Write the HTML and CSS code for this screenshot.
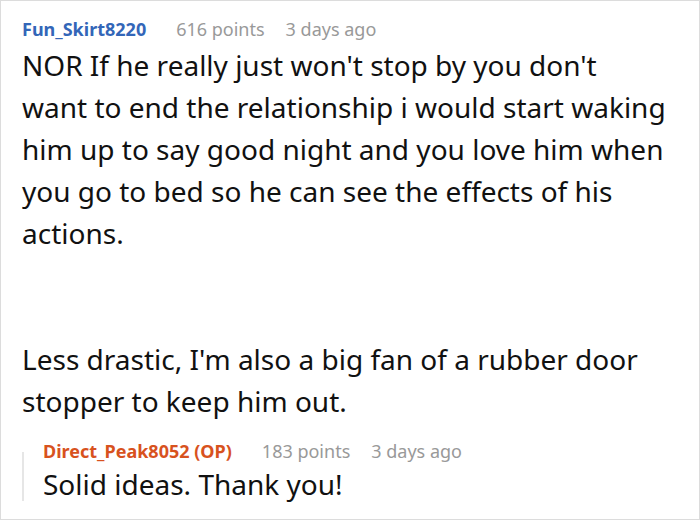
FILE: index.html
```html
<!DOCTYPE html>
<html>
<head>
<meta charset="utf-8">
<link rel="stylesheet" href="styles.css">
</head>
<body>
<div class="frame">
  <div class="comment">
    <div class="meta">
      <span class="author">Fun_Skirt8220</span>
      <span class="points">616 points</span>
      <span class="time">3 days ago</span>
    </div>
    <div class="body">
      <p>NOR If he really just won't stop by you don't want to end the relationship i would start waking him up to say good night and you love him when you go to bed so he can see the effects of his actions.</p>
      <p class="gap">Less drastic, I'm also a big fan of a rubber door stopper to keep him out.</p>
    </div>
    <div class="reply">
      <div class="thread-line"></div>
      <div class="reply-content">
        <div class="meta">
          <span class="author op">Direct_Peak8052 (OP)</span>
          <span class="points">183 points</span>
          <span class="time">3 days ago</span>
        </div>
        <div class="body">
          <p>Solid ideas. Thank you!</p>
        </div>
      </div>
    </div>
  </div>
</div>
</body>
</html>
```
FILE: styles.css
```css
html, body {
  margin: 0;
  padding: 0;
  background: #fff;
}
.frame {
  width: 700px;
  height: 520px;
  box-sizing: border-box;
  border: 1px solid #dcdcdc;
  overflow: hidden;
  font-family: "Noto Sans", sans-serif;
  color: #111;
}
.comment {
  padding: 16px 0 0 21px;
}
.meta {
  display: flex;
  align-items: baseline;
  font-size: 18px;
  line-height: 24px;
  white-space: nowrap;
}
.author {
  font-weight: bold;
  color: #3366b8;
  margin-right: 30px;
}
.author.op {
  color: #d8521e;
}
.points {
  color: #999;
  margin-right: 21px;
}
.time {
  color: #999;
}
.comment > .meta {
  margin-bottom: 3px;
}
.body {
  font-size: 28px;
  line-height: 42px;
}
.comment > .body {
  width: 645.5px;
}
.body p {
  margin: 0;
}
.body p.gap {
  margin-top: 84px;
}
.reply {
  display: flex;
  margin-top: 17px;
}
.thread-line {
  width: 2px;
  flex: none;
  background: #e6e6e6;
  margin: 13px 0 4px;
}
.reply-content {
  margin-left: 19px;
}
```
